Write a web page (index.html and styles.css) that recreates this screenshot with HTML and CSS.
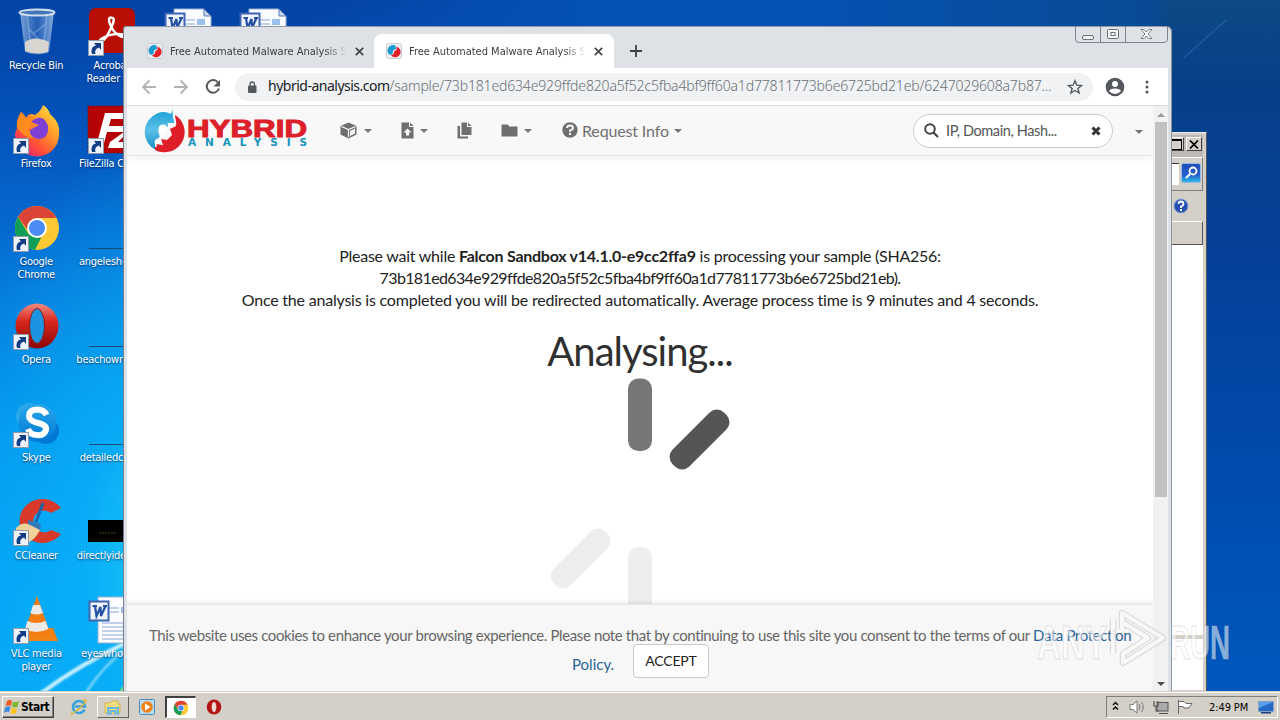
FILE: index.html
```html
<!DOCTYPE html>
<html lang="en">
<head>
<meta charset="utf-8">
<title>Hybrid Analysis</title>
<link rel="stylesheet" href="styles.css">
</head>
<body>
<svg width="0" height="0" class="defs">
  <defs>
    <linearGradient id="red" x1="0" y1="0" x2="0" y2="1"><stop offset="0" stop-color="#f08a80"/><stop offset=".4" stop-color="#d8261c"/><stop offset="1" stop-color="#8c0606"/></linearGradient>
    <linearGradient id="fox" x1="1" y1="0" x2="0.2" y2="1"><stop offset="0" stop-color="#fff04a"/><stop offset=".4" stop-color="#ffa02a"/><stop offset=".75" stop-color="#ff4a3a"/><stop offset="1" stop-color="#e8208a"/></linearGradient>
    <linearGradient id="sky" x1="0" y1="0" x2="0" y2="1"><stop offset="0" stop-color="#28a8ea"/><stop offset="1" stop-color="#0078d4"/></linearGradient>
    <linearGradient id="glass" x1="0" y1="0" x2="1" y2="0"><stop offset="0" stop-color="#9cbbe2" stop-opacity=".8"/><stop offset=".5" stop-color="#3a70c0" stop-opacity=".6"/><stop offset="1" stop-color="#a8c6ea" stop-opacity=".8"/></linearGradient>
    <linearGradient id="blu" x1="0" y1="0" x2="0" y2="1"><stop offset="0" stop-color="#1aa0d6"/><stop offset=".5" stop-color="#5cc0e6"/><stop offset="1" stop-color="#1490c6"/></linearGradient>
    <symbol id="arrow" viewBox="0 0 16 16"><rect x=".5" y=".5" width="15" height="15" fill="#eef2fa" stroke="#8e9cae"/><path d="M4 14C2.500 9 5 6 8 5.500L6 3H13V10L11 7.500C8 8.500 6.500 10.500 7.500 14Z" fill="#123c86"/></symbol>
    <symbol id="chrome" viewBox="0 0 48 48"><circle cx="24" cy="24" r="22" fill="#fcc934"/><path d="M24 2A22 22 0 0 1 43.500 14H24L16 28 5 13A22 22 0 0 1 24 2Z" fill="#db4437"/><path d="M5 13L15.500 30 28 34 22 46A22 22 0 0 1 5 13Z" fill="#0f9d58"/><circle cx="24" cy="24" r="10" fill="#fff"/><circle cx="24" cy="24" r="8" fill="#4c8bf5"/></symbol>
    <symbol id="opera" viewBox="0 0 48 48"><ellipse cx="24" cy="24" rx="21.500" ry="22.500" fill="url(#red)"/><ellipse cx="24" cy="24" rx="7.500" ry="17.500" fill="#1d93e2" stroke="#8c1a14"/></symbol>
    <symbol id="opera-small" viewBox="0 0 48 48"><ellipse cx="24" cy="24" rx="22" ry="22.500" fill="#b41414"/><ellipse cx="24" cy="24" rx="7.500" ry="16" fill="#f3dcd8" stroke="#8c1a14"/></symbol>
    <symbol id="word" viewBox="0 0 48 48"><path d="M10 1H40L47 8V47H10Z" fill="#fbfcff" stroke="#9ab0d4"/><path d="M40 1V8H47Z" fill="#c8d6ee" stroke="#5c7ab8"/><path d="M20 12H31M20 16H31M14 27H44M14 31H44M14 35H44M14 39H44M14 43H44" stroke="#8ca4d8" stroke-width="1.200"/><rect x="33" y="11" width="8" height="6" fill="#9cc0ec"/><rect x="1.500" y="5.500" width="19" height="19" fill="#eef3fc" stroke="#3f66b4" stroke-width="2"/><path d="M4.500 10H9M7 10L8.500 20 12.500 11 13 20 17.500 10M15 10H19" stroke="#2450a4" stroke-width="2.200" fill="none"/></symbol>
    <symbol id="fav" viewBox="0 0 16 16"><rect x=".5" y=".5" width="15" height="15" rx="2" fill="#eceef1" stroke="#c8ccd2"/><path d="M9.500 2.500A5.500 5.500 0 0 0 4 12L6.500 11 7 7.500 10 6Z" fill="#1c9bd0"/><path d="M10.500 3.500A5.500 5.500 0 1 1 5 12.500L7.500 11 8.500 8 10.500 7Z" fill="#e01f28"/></symbol>
  </defs>
</svg>
<main class="desktop">
  <svg class="rays" width="1280" height="692"><path d="M1184 58L1226 20" stroke="#3a7cc0" stroke-opacity=".4" stroke-width="1.500" fill="none"/><g fill="none" class="glow"><path d="M40 694Q80 664 132 640" stroke="#d4f4ff" stroke-width="4"/><path d="M85 694Q104 664 130 646" stroke="#9fe4fc" stroke-width="2"/></g><path d="M117 694L126 682V694Z" fill="#65df86"/></svg>

  <section class="icons">
    <div class="item"><svg viewBox="0 0 48 48"><path d="M7 4L12 44Q24 49 36 44L41 4Z" fill="url(#glass)"/><path d="M12 34Q22 27 36 34L35 44Q24 48 12 43Z" fill="#d8d5ce"/><path d="M14 6L18 42M34 6L30 42M15 20L29 35M34 15L20 26" stroke="#c2dcf6" stroke-opacity=".35" stroke-width="1.500"/><ellipse cx="24" cy="4.500" rx="17.500" ry="3" fill="#4478b8" stroke="#d4e0ee" stroke-width="1.800"/></svg><p>Recycle Bin</p></div>
    <div class="item"><svg viewBox="0 0 48 48"><rect x="1" y="0" width="46" height="45" rx="7" fill="#b90e02"/><path d="M24 10C20 8 20 13 24 20C28 28 36 30 37 28C38 25 21 25 13 31C9 35 16 36 22 22C26 14 27 10 24 10Z" fill="none" stroke="#fff" stroke-width="2.500"/><use href="#arrow" x="0" y="32" width="16" height="16"/></svg><p>Acrobat<br>Reader DC</p></div>
    <div class="item"><svg viewBox="0 0 48 48"><use href="#word"/></svg></div>
    <div class="item"><svg viewBox="0 0 48 48"><use href="#word"/></svg></div>

    <div class="item"><svg viewBox="0 0 48 48"><path d="M4 23Q3 14 8 6Q11 8 13 12Q16 6 22 9Q28 5 30-1Q36 3 37 8Q48 17 46 29A22 22 0 0 1 2 28Q2 25 4 23Z" fill="url(#fox)"/><path d="M4 22Q3 14 8 6L13 12Q20 9 23 16L15 24 25 29Q17 38 4 22Z" fill="#ff8a20"/><path d="M18 16Q30 6 35 20Q36 33 25 33Q16 31 17 24L26 19Z" fill="#7d3fd4"/><use href="#arrow" x="0" y="32" width="16" height="16"/></svg><p>Firefox</p></div>
    <div class="item"><svg viewBox="0 0 48 48"><rect width="48" height="47" fill="#b50204" stroke="#780a10" stroke-dasharray="2 2"/><path d="M9 37L17 7H38L36 13H23L21 20H34L32 26H19L16 37ZM27 20H46L30 36H43V42H20L22 36 36 26H26Z" fill="#fff"/><use href="#arrow" x="0" y="32" width="16" height="16"/></svg><p>FileZilla Client</p></div>
    <div class="item"></div><div class="item"></div>

    <div class="item"><svg viewBox="0 0 48 48"><use href="#chrome"/><use href="#arrow" x="0" y="32" width="16" height="16"/></svg><p>Google<br>Chrome</p></div>
    <div class="item"><svg viewBox="0 0 48 48"><path d="M1 44.500H48" stroke="#164878"/></svg><p>angeleshotels</p></div>
    <div class="item"></div><div class="item"></div>

    <div class="item"><svg viewBox="0 0 48 48"><use href="#opera"/><use href="#arrow" x="0" y="32" width="16" height="16"/></svg><p>Opera</p></div>
    <div class="item"><svg viewBox="0 0 48 48"><path d="M1 44.500H48" stroke="#164878"/></svg><p>beachowner.rtf</p></div>
    <div class="item"></div><div class="item"></div>

    <div class="item"><svg viewBox="0 0 48 48"><circle cx="16" cy="16" r="13" fill="#28a8ea"/><circle cx="33" cy="31" r="13" fill="#0078d4"/><circle cx="24.500" cy="23" r="19" fill="url(#sky)"/><path d="M33.500 15Q31 9.500 24 9.500Q16 10 16 16Q16 21 25 23Q34 25 33 30Q31 36 24 35Q17 35 15 29" stroke="#fff" stroke-width="6" fill="none"/><use href="#arrow" x="0" y="32" width="16" height="16"/></svg><p>Skype</p></div>
    <div class="item"><svg viewBox="0 0 48 48"><path d="M1 44.500H48" stroke="#164878"/></svg><p>detailedclicks</p></div>
    <div class="item"></div><div class="item"></div>

    <div class="item"><svg viewBox="0 0 48 48"><path d="M48 10A23 22 0 1 0 48 36L38 32A11 11 0 1 1 38 15Z" fill="#d8392b"/><path d="M30 5L23 24" stroke="#1966a8" stroke-width="3"/><path d="M15 22L28 26 27 33 15 29Z" fill="#3279b6"/><path d="M3 30Q10 23 17 27L27 32Q22 42 14 45Q10 40 3 39Z" fill="#f3d19a"/><use href="#arrow" x="0" y="32" width="16" height="16"/></svg><p>CCleaner</p></div>
    <div class="item"><svg viewBox="0 0 48 48"><rect y="22" width="48" height="22" fill="#000"/><path d="M11 35H28" stroke="#554b14" stroke-dasharray="2 1"/></svg><p>directlyide.png</p></div>
    <div class="item"></div><div class="item"></div>

    <div class="item"><svg viewBox="0 0 48 48"><path d="M10 32H40L45 45H8Z" fill="#f28215"/><path d="M24 0L37 37Q24 43 11 37Z" fill="#f47c10"/><path d="M20 9H27L30 17Q23 20 17.500 17ZM14.500 25Q23 29 32.500 25L35.500 33Q23 39 12 33Z" fill="#eceae6"/><use href="#arrow" x="0" y="32" width="16" height="16"/></svg><p>VLC media<br>player</p></div>
    <div class="item"><svg viewBox="0 0 48 48"><use href="#word"/></svg><p>eyeswho.doc</p></div>
  </section>

  <section class="explorer">
    <div class="ex-title"><span class="ex-btn ex-max"></span><span class="ex-btn"><svg width="10" height="9"><path d="M1 .5L9 8.500M9 .5L1 8.500" stroke="#000" stroke-width="1.700"/></svg></span></div>
    <div class="ex-search"><svg width="20" height="20"><defs><linearGradient id="sb" x1="0" y1="0" x2="0" y2="1"><stop offset="0" stop-color="#244bb8"/><stop offset=".6" stop-color="#2460cc"/><stop offset="1" stop-color="#30c0e4"/></linearGradient></defs><rect x=".5" y=".5" width="19" height="19" rx="2" fill="url(#sb)" stroke="#94b8e8"/><circle cx="12" cy="8" r="3.500" fill="none" stroke="#fff" stroke-width="1.800"/><path d="M9 11L5 15" stroke="#fff" stroke-width="2"/></svg></div>
    <div class="ex-help"><svg width="16" height="16"><circle cx="8" cy="8" r="7" fill="#2450b0" stroke="#89a4d8"/><path d="M5.500 6Q5.500 3.500 8 3.500T10.500 6Q10.500 7.500 8 8.500V10" fill="none" stroke="#fff" stroke-width="1.800"/><rect x="7" y="11" width="2" height="2" fill="#fff"/></svg></div>
    <div class="ex-head"></div>
    <div class="ex-body"></div>
  </section>

  <section class="browser">
    <header class="tabs">
      <div class="tab"><svg width="16" height="16"><use href="#fav"/></svg><span class="tab-text">Free Automated Malware Analysis Se</span><svg class="x" width="9" height="9"><path d="M.8.8L8.200 8.200M8.200.8L.8 8.200" stroke="#45494d" stroke-width="1.800"/></svg></div>
      <div class="tab active"><svg width="16" height="16"><use href="#fav"/></svg><span class="tab-text">Free Automated Malware Analysis Se</span><svg class="x" width="9" height="9"><path d="M.8.8L8.200 8.200M8.200.8L.8 8.200" stroke="#45494d" stroke-width="1.800"/></svg></div>
      <svg class="plus" width="12" height="12"><path d="M6 0V12M0 6H12" stroke="#3c4043" stroke-width="1.800"/></svg>
      <svg class="winbtns" width="93" height="18"><path d="M.5 0V13Q.5 16.500 4 16.500H89Q92.500 16.500 92.500 13V0M25.500 0V16.500M50.500 0V16.500" fill="none" stroke="#7d838c"/><rect x="7.500" y="9.500" width="11" height="4" rx="1.500" fill="#f4f4f4" stroke="#6a6f77"/><rect x="32.500" y="3.500" width="11" height="9" rx="1" fill="#f4f4f4" stroke="#6a6f77"/><rect x="36" y="6.500" width="4" height="3" fill="#fff" stroke="#6a6f77"/><path d="M66 3.500H69L71.500 6 74 3.500H77L73 8 77 12.500H74L71.500 10 69 12.500H66L70 8Z" fill="#fff" stroke="#777c84"/></svg>
    </header>
    <div class="toolbar">
      <svg class="nav" width="80" height="16" fill="none"><path d="M15 8H2M8.500 1.500L2 8 8.500 14.500" stroke="#b0b3b6" stroke-width="1.800"/><path d="M33 8H46M39.500 1.500L46 8 39.500 14.500" stroke="#b0b3b6" stroke-width="1.800"/><path d="M77 3.500A6.300 6.300 0 1 0 78 9.500" stroke="#55595d" stroke-width="2"/><path d="M79 1V7.500H72.500Z" fill="#55595d"/></svg>
      <div class="url"><svg width="10" height="12"><rect x="1" y="4.500" width="8.500" height="7.500" rx="1" fill="#55595e"/><path d="M3 5V3.200Q3 1 5.200 1T7.500 3.200V5" fill="none" stroke="#55595e" stroke-width="1.300"/></svg><span class="url-text"><b>hybrid-analysis.com</b><span class="path">/sample/73b181ed634e929ffde820a5f52c5fba4bf9ff60a1d77811773b6e6725bd21eb/6247029608a7b87...</span></span><svg width="16" height="16"><path d="M8 1.800L9.800 6.200 14.500 6.500 10.900 9.500 12.100 14 8 11.500 3.900 14 5.100 9.500 1.500 6.500 6.200 6.200Z" fill="none" stroke="#54585c" stroke-width="1.400"/></svg></div>
      <svg class="user" width="20" height="20"><circle cx="10" cy="10" r="9.300" fill="#54585d"/><circle cx="10" cy="7" r="3" fill="#fff"/><path d="M4 14Q5 11.500 10 11.500T16 14Q13.500 17 10 17T4 14Z" fill="#fff"/></svg>
      <svg width="4" height="14" class="dots"><circle cx="2" cy="2" r="1.500"/><circle cx="2" cy="7" r="1.500"/><circle cx="2" cy="12" r="1.500"/></svg>
    </div>
    <div class="viewport">
      <div class="page">
        <nav class="site-nav">
          <svg class="logo" width="166" height="44"><path d="M28 5L29.500 1 30 8 32 15 25 14 26 18 20 17 15 22 17 28 12 31 13 41A20 20 0 0 1 14 4.500Q21 1.500 28 5Z" fill="url(#blu)"/><path d="M32 6A20 20 0 0 1 24 43Q17 44 12 41L12 35 20 36 18 30 24 31 29 26 27 20 33 17Z" fill="#de1f2a"/><circle cx="20" cy="20" r="4.500" fill="#fff"/><path d="M30.500 5L32.500 14.500 25.500 15 26 19 21 20 21 25 17 28.500 18 34 12.500 33 13 38" fill="none" stroke="#fff" stroke-width="1.600"/><text x="44" y="27.500" class="logo-h" textLength="120" lengthAdjust="spacingAndGlyphs">HYBRID</text><text x="45" y="37" class="logo-a" textLength="119">ANALYSIS</text></svg>
          <div class="menu m1"><svg width="18" height="17"><path d="M8.500.5L16.500 4V12.500L8.500 16.500.5 12.500V4Z" fill="#6f6f6f"/><path d="M1.500 4.500L8.500 7.500 15.500 4.500M8.500 7.500V15" stroke="#f8f8f8" stroke-width="1.200" fill="none"/><path d="M10 9L15 6.500V11.500L10 14Z" fill="#f8f8f8"/></svg><i></i></div>
          <div class="menu m2"><svg width="13" height="17"><path d="M.5.5H8V5H12.500V16.500H.5ZM9 .5L12.500 4H9Z" fill="#6f6f6f"/><path d="M6.500 6.500L10.500 10.500H8V13.500H5V10.500H2.500Z" fill="#f8f8f8"/></svg><i></i></div>
          <div class="menu m3"><svg width="15" height="17"><path d="M4.500.5H10V5H14.500V13H4.500ZM11 .5L14.500 4H11ZM.5 4H3V14.500H11V16.500H.5Z" fill="#6f6f6f"/></svg></div>
          <div class="menu m4"><svg width="17" height="13"><path d="M.5.5H6.500L8.500 2.500H16.500V12.500H.5Z" fill="#6f6f6f"/></svg><i></i></div>
          <div class="menu m5"><svg width="16" height="16"><circle cx="8" cy="8" r="7.700" fill="#6f6f6f"/><path d="M5 6Q5 3.500 8 3.500T11 6Q11 7.500 8 8.500V10" fill="none" stroke="#f8f8f8" stroke-width="1.900"/><rect x="7" y="11" width="2" height="2" fill="#f8f8f8"/></svg><span class="req">Request Info</span><i></i></div>
          <div class="search"><svg width="15" height="15"><circle cx="6" cy="6" r="4.800" fill="none" stroke="#444" stroke-width="2"/><path d="M9.500 9.500L14 14" stroke="#444" stroke-width="2.200"/></svg><span>IP, Domain, Hash...</span><svg width="10" height="10"><path d="M1.500 1.500L8.500 8.500M8.500 1.500L1.500 8.500" stroke="#333" stroke-width="3"/></svg></div>
          <i class="last"></i>
        </nav>
        <div class="wait"><p class="l1">Please wait while <strong>Falcon Sandbox v14.1.0-e9cc2ffa9</strong> is processing your sample (SHA256:</p><p class="l2">73b181ed634e929ffde820a5f52c5fba4bf9ff60a1d77811773b6e6725bd21eb).</p><p class="l3">Once the analysis is completed you will be redirected automatically. Average process time is 9 minutes and 4 seconds.</p></div>
        <h1>Analysing...</h1>
        <svg class="spinner" width="240" height="230"><rect x="108" y="0.500" width="24" height="72.500" rx="10.500" fill="#777"/><rect x="-12" y="-36.500" width="24" height="73" rx="10.500" fill="#555" transform="translate(179.500 61.500) rotate(45)"/><rect x="-12" y="-36.500" width="24" height="73" rx="10.500" fill="#eee" transform="translate(60.500 180.500) rotate(45)"/><rect x="108" y="169" width="24" height="73" rx="10.500" fill="#eee"/></svg>
        <footer class="cookies"><p class="c1">This website uses cookies to enhance your browsing experience. Please note that by continuing to use this site you consent to the terms of our <a>Data Protection</a></p><div class="c2"><a>Policy.</a><button>ACCEPT</button></div></footer>
      </div>
      <div class="scroll"><i class="up"></i><div class="thumb"></div><i class="down"></i></div>
    </div>
  </section>

  <svg class="mark" width="200" height="64"><g class="letters"><text x="1" y="52" textLength="70" lengthAdjust="spacingAndGlyphs">ANY</text><text x="134" y="52" textLength="60" lengthAdjust="spacingAndGlyphs">RUN</text></g><g fill="none" stroke="#b4b4b4" stroke-opacity=".4" stroke-width="6.500" stroke-linejoin="round"><path d="M86 22V6L127 31 87 56V47L112 31 86 15M77 46V12"/></g><g fill="none" stroke="#fff" stroke-opacity=".8" stroke-width="4" stroke-linejoin="round"><path d="M86 22V6L127 31 87 56V47L112 31 86 15M77 46V12"/></g></svg>

  <footer class="taskbar">
    <div class="start"><svg width="16" height="16"><path d="M3 2Q6 0 8 2L7 7Q4 5.500 1.500 7Z" fill="#ee5a24"/><path d="M9 2.500Q12 4 15 2L13.500 8Q11 9 8 7.500Z" fill="#7fba2a"/><path d="M1 8.500Q4 6.500 6.500 8L5 13.500Q3 12 0 14Z" fill="#3b8ede"/><path d="M7.500 8.500Q10 10.500 13 9L12 14Q9 16 6.500 14Z" fill="#fbc21e"/></svg><span>Start</span></div>
    <div class="task ie"><svg width="18" height="18"><path d="M14.500 11.500A6 6 0 1 1 15 8.500H5" fill="none" stroke="#36a3e0" stroke-width="2.500"/><path d="M2 15Q0 18 5 14T15 5Q18 0 12 3" fill="none" stroke="#dcb53c" stroke-width="1.500"/></svg></div>
    <div class="task raised"><svg width="18" height="17"><path d="M1 4H6L8 2H14V5H16V14H1Z" fill="#f4dc80" stroke="#d8b64c"/><path d="M4 16V9H14V16M6.500 16V12H11.500V16" fill="none" stroke="#68b8e4" stroke-width="2"/></svg></div>
    <div class="task media"><svg width="16" height="16"><rect x=".5" y=".5" width="15" height="15" rx="1" fill="#b8daf2" stroke="#4e8cc0"/><circle cx="8" cy="8" r="5.800" fill="#f38314"/><path d="M6 4.500L11.500 8 6 11.500Z" fill="#fff"/></svg></div>
    <div class="task pressed"><svg width="16" height="16"><use href="#chrome"/></svg></div>
    <div class="task op"><svg width="16" height="16"><use href="#opera-small"/></svg></div>
    <div class="tray"><svg width="86" height="18" fill="none"><path d="M1 7L3.500 4.500 6 7M1 11.500L3.500 9 6 11.500" stroke="#111" stroke-width="1.500"/><path d="M18 6.500H21L25 3V15L21 11.500H18Z" fill="#fff" stroke="#777"/><path d="M27 6Q29 9 27 12M29.500 4Q33 9 29.500 14" stroke="#777"/><rect x="45" y="4.500" width="11" height="8.500" fill="#aaa" stroke="#555"/><path d="M47 15.500H56M42 3V8H46V3M44 8V13H47" stroke="#555" stroke-width="1.200"/><path d="M66.500 2V16M66.500 3.500H72L74 5.500H80L77 10H72L71 8.500H66.500" fill="#fff" stroke="#666"/></svg><time>2:49 PM</time><svg width="16" height="14"><rect x=".5" y="1.500" width="15" height="10" fill="#2468c8" stroke="#88a0c0"/><path d="M1 2H15L1 8Z" fill="#58a0e8"/><rect x="3" y="12" width="10" height="1.500" fill="#1c3c80"/></svg></div>
  </footer>
</main>
</body>
</html>
```
FILE: styles.css
```css
* { box-sizing: border-box; }
body { margin: 0; overflow: hidden; font-family: "DejaVu Sans Condensed", "DejaVu Sans", sans-serif; }
p, h1 { margin: 0; font-weight: normal; }
.defs { position: absolute; }
svg { display: block; flex: none; }
.desktop { position: relative; width: 1280px; height: 720px; overflow: hidden;
  background: radial-gradient(ellipse 330px 440px at 230px 560px, #20d0f8 0, #20d0f8 12%, rgba(10,176,248,.8) 45%, rgba(0,140,236,0) 100%), linear-gradient(90deg, rgba(4,74,176,0) 300px, #0552b4 600px, #0552b4 800px, #084a94 1150px, rgba(8,74,148,0) 1170px) 0 0 / 1280px 30px no-repeat, linear-gradient(180deg, #0343a4 0, #0450b8 110px, #056ad0 230px, #0390ea 420px, #00a2f6 600px, #06a6f6 692px) 0 0 / 1150px 720px no-repeat, linear-gradient(180deg, #0d4985 0, #073f88 90px, #04409a 260px, #0050b4 560px, #0058bc 692px); }
.rays { position: absolute; left: 0; top: 0; }
.glow { filter: blur(.8px); }
.icons { position: absolute; left: -1px; top: 8px; display: grid; grid-template-columns: repeat(4, 75.500px); grid-auto-rows: 98px; }
.item { display: flex; flex-direction: column; align-items: center; }
.item svg { width: 48px; height: 48px; overflow: visible; }
.item p { margin-top: 3px; margin-left: -1px; white-space: nowrap; text-align: center; color: #fff; font-size: 11px; line-height: 13px; letter-spacing: -.25px; text-shadow: 0 1px 2px rgba(0,30,80,.8); }

.explorer { position: absolute; left: 1100px; top: 132px; width: 107px; height: 560px; padding: 2px 3px 2px 2px; display: flex; flex-direction: column; background: #d4d0c8; border-right: 1px solid #555; border-top: 1px solid #eee; }
.ex-title { height: 22px; padding: 2px 1px; display: flex; justify-content: flex-end; gap: 2px; background: #bdb9b4; }
.ex-btn { width: 16px; height: 14px; display: flex; align-items: center; justify-content: center; background: #d4d0c8; border: 1px solid; border-color: #fff #404040 #404040 #fff; }
.ex-max::before { content: ""; width: 9px; height: 8px; border: 1px solid #000; border-top-width: 2px; }
.ex-search { height: 34px; padding: 5px 1px 5px 0; display: flex; justify-content: flex-end; border: 1px solid #fff; border-right-color: #808080; border-bottom-color: #808080; }
.ex-search::before { content: ""; flex: 1; margin-right: 2px; background: #fff; border-top: 1px solid #333; }
.ex-help { height: 30px; padding: 7px 14px; display: flex; justify-content: flex-end; }
.ex-head { height: 24px; border: 1px solid; border-color: #fff #555 #555 #fff; background: #d4d0c8; }
.ex-body { flex: 1; background: linear-gradient(#fff 390px, #d4d0c8 390px, #d4d0c8 394px, #fff 394px); }

.browser { position: absolute; left: 123px; top: 26px; width: 1049px; height: 667px; padding: 0 4px 1px 4px; display: flex; flex-direction: column; background: #dee1e6; border-radius: 4px 6px 0 0; box-shadow: inset 1px 0 #747e8c, inset -1px 0 #8a929e, inset 0 1px #8e9aac; }
.tabs { height: 42px; display: flex; padding-left: 12px; }
.tab { width: 235px; height: 34px; margin-top: 8px; padding: 0 10px 0 8px; display: flex; align-items: center; border-radius: 8px 8px 0 0; }
.tab.active { width: 240px; background: #fff; padding: 0 11px 0 12px; }
.tab-text { width: 177px; margin: 0 10px 0 7px; overflow: hidden; white-space: nowrap; font-size: 11px; letter-spacing: 0; color: #3a3d41; -webkit-mask-image: linear-gradient(90deg, #000 155px, transparent 177px); mask-image: linear-gradient(90deg, #000 155px, transparent 177px); }
.plus { margin: 19px 0 0 16px; }
.winbtns { margin: 0 0 0 auto; }
.toolbar { height: 38px; background: #fff; border-bottom: 1px solid #dcdde0; display: flex; align-items: center; padding: 0 19px 0 14px; }
.url { width: 858px; height: 28px; margin-left: 14px; padding: 0 10px 0 12px; display: flex; align-items: center; border-radius: 14px; background: #f0f2f4; }
.url-text { width: 804px; margin-left: 11px; white-space: nowrap; font-family: "Noto Sans", sans-serif; font-size: 14px; line-height: 18px; margin-top: -2px; color: #6b6f74; font-weight: 300; }
.url-text b { font-weight: 400; color: #202124; letter-spacing: -.5px; }
.path { letter-spacing: -.16px; }
.user { margin-left: 12px; }
.dots { margin-left: 20px; fill: #505458; }
.viewport { flex: 1; display: flex; min-height: 0; background: #f1f1f1; }
.page { position: relative; width: 1026px; background: #fff; font-family: Lato, sans-serif; overflow: hidden; }
.site-nav { height: 50px; display: flex; align-items: center; padding-left: 16px; background: #f8f8f8; border-bottom: 1px solid #e4e4e4; box-shadow: 0 2px 8px rgba(0,0,0,.07); }
.logo { overflow: visible; }
.logo-h { font: bold 23px "Liberation Sans", sans-serif; fill: #dc202a; stroke: #dc202a; stroke-width: .9px; }
.logo-a { font: bold 10.500px "DejaVu Sans", sans-serif; fill: #1594bd; }
.menu { height: 20px; display: flex; align-items: center; gap: 7px; margin-top: -1px; }
.site-nav i { border: 4px solid transparent; border-top-color: #777; border-bottom: 0; margin-top: 2px; }
.m1 { margin-left: 31px; gap: 6px; }
.m2 { margin-left: 29px; gap: 6px; }
.m3 { margin-left: 29px; }
.m4 { margin-left: 29px; gap: 6px; }
.m5 { margin-left: 30px; gap: 4px; }
.req { width: 87px; white-space: nowrap; font-size: 16px; color: #6f6f6f; letter-spacing: -.15px; }
.m5 i { margin-left: 1px; }
.search { width: 200px; height: 34px; margin-left: auto; padding: 0 11px 0 10px; display: flex; align-items: center; background: #fff; border: 1px solid #ccc; border-radius: 17px; font-size: 14.500px; color: #555; }
.search span { margin: 0 auto 0 7px; letter-spacing: -.37px; }
.site-nav .last { margin-left: 22px; margin-right: 10px; }
.wait { margin-top: 89px; height: 66px; color: #222; font-size: 16px; line-height: 22px; text-align: center; white-space: nowrap; }
.l1 { letter-spacing: -.25px; }
.l2 { letter-spacing: -.63px; }
.l3 { letter-spacing: -.21px; }
h1 { margin-top: 17px; height: 47px; color: #303030; font-size: 40px; line-height: 46px; text-align: center; letter-spacing: -1px; }
.spinner { margin: 3px auto 0; }
.cookies { position: absolute; left: 0; right: 0; bottom: 0; height: 88px; padding: 16px 0 0 22px; background: #f7f7f7; border-top: 1px solid #e6e6e6; box-shadow: 0 -1px 5px rgba(0,0,0,.12); font-size: 15px; line-height: 28px; color: #666; }
.c1 { white-space: nowrap; letter-spacing: -.383px; }
.cookies a { color: #2b6498; }
.c2 { display: flex; padding-left: 423px; margin-top: -5px; align-items: center; }
.c2 a { width: 61px; margin-top: 5px; }
.c2 button { width: 76px; height: 34px; padding: 0 0 2px; border: 1px solid #c8c8c8; border-radius: 4px; background: #fff; font: 14px Lato, sans-serif; letter-spacing: -.2px; color: #222; }
.scroll { width: 15px; display: flex; flex-direction: column; align-items: center; background: #f1f1f1; }
.up { margin: 7px 0 5px; border: 4px solid transparent; border-top: 0; border-bottom-color: #999; }
.thumb { width: 12px; height: 375px; background: #c1c1c1; }
.down { margin: auto 0 6px; border: 4px solid transparent; border-bottom: 0; border-top-color: #505050; }
.mark { position: absolute; left: 1036px; top: 607px; font: bold 49px "Liberation Sans", sans-serif; }
.letters { fill: rgba(255,255,255,.55); stroke: rgba(180,180,180,.4); stroke-width: 1px; }

.taskbar { position: absolute; left: 0; right: 0; bottom: 0; height: 28px; padding: 3px 2px 2px; display: flex; background: #d4d0c8; border-top: 1px solid #fff; box-shadow: 0 -1px #d4d0c8; font-size: 11px; color: #000; }
.start { width: 52px; display: flex; align-items: center; gap: 1px; padding: 0 1px; border: 1px solid; border-color: #fff #404040 #404040 #fff; box-shadow: inset -1px -1px #808080; font-weight: bold; font-size: 12px; letter-spacing: -.5px; }
.task { width: 31px; display: flex; align-items: center; justify-content: center; }
.ie { margin-left: 9px; }
.raised { margin-left: 3px; width: 32px; border: 1px solid; border-color: #fff #606060 #606060 #fff; }
.media { margin-left: 1px; width: 33px; }
.pressed { margin-left: 2px; background: #fff; border: 1px solid; border-color: #404040 #fff #fff #404040; border-width: 2px 1px 1px 2px; }
.op { margin-left: 2px; }
.tray { width: 172px; margin-left: auto; padding: 0 3px 0 5px; display: flex; align-items: center; border: 1px solid; border-color: #808080 #fff #fff #808080; }
.tray time { width: 50px; margin-left: 11px; white-space: nowrap; letter-spacing: -.1px; }
```
